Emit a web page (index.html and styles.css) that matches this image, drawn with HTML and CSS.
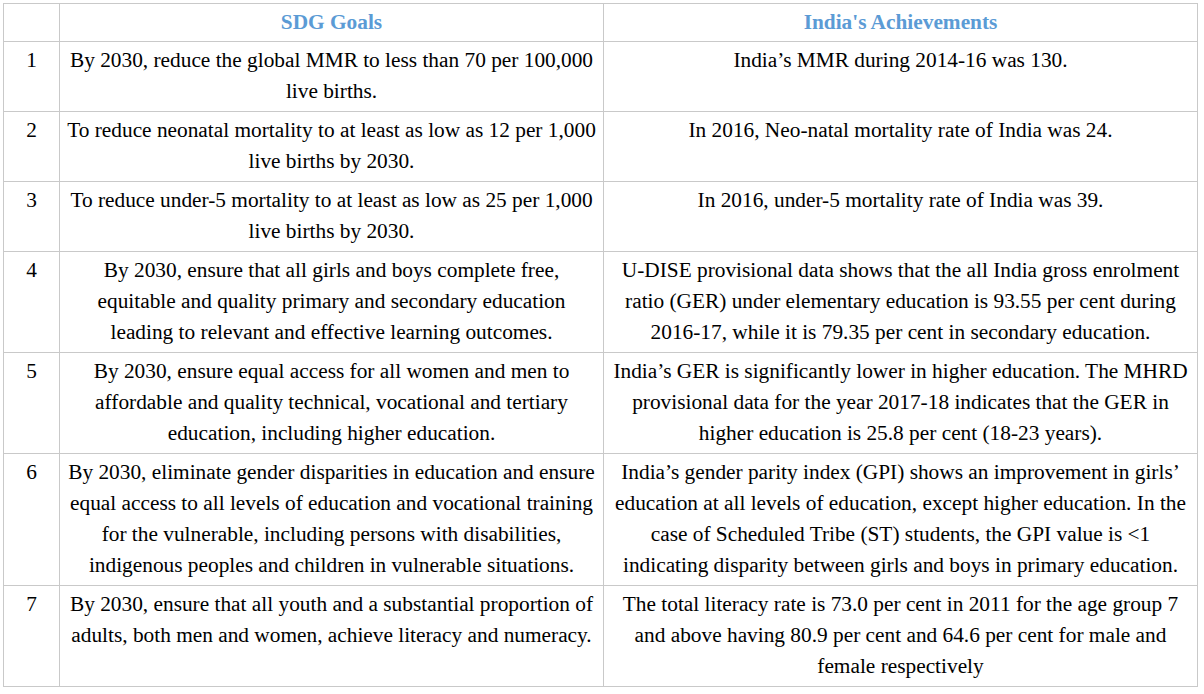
FILE: index.html
```html
<!DOCTYPE html>
<html>
<head>
<meta charset="utf-8">
<link rel="stylesheet" href="styles.css">
</head>
<body>
<table class="sdg">
  <colgroup>
    <col class="c-num">
    <col class="c-goal">
    <col class="c-ach">
  </colgroup>
  <thead>
    <tr>
      <th></th>
      <th>SDG Goals</th>
      <th>India's Achievements</th>
    </tr>
  </thead>
  <tbody>
    <tr>
      <td>1</td>
      <td>By 2030, reduce the global MMR to less than 70 per 100,000<br>live births.</td>
      <td>India’s MMR during 2014-16 was 130.</td>
    </tr>
    <tr>
      <td>2</td>
      <td>To reduce neonatal mortality to at least as low as 12 per 1,000<br>live births by 2030.</td>
      <td>In 2016, Neo-natal mortality rate of India was 24.</td>
    </tr>
    <tr>
      <td>3</td>
      <td>To reduce under-5 mortality to at least as low as 25 per 1,000<br>live births by 2030.</td>
      <td>In 2016, under-5 mortality rate of India was 39.</td>
    </tr>
    <tr>
      <td>4</td>
      <td>By 2030, ensure that all girls and boys complete free,<br>equitable and quality primary and secondary education<br>leading to relevant and effective learning outcomes.</td>
      <td>U-DISE provisional data shows that the all India gross enrolment<br>ratio (GER) under elementary education is 93.55 per cent during<br>2016-17, while it is 79.35 per cent in secondary education.</td>
    </tr>
    <tr>
      <td>5</td>
      <td>By 2030, ensure equal access for all women and men to<br>affordable and quality technical, vocational and tertiary<br>education, including higher education.</td>
      <td>India’s GER is significantly lower in higher education. The MHRD<br>provisional data for the year 2017-18 indicates that the GER in<br>higher education is 25.8 per cent (18-23 years).</td>
    </tr>
    <tr>
      <td>6</td>
      <td>By 2030, eliminate gender disparities in education and ensure<br>equal access to all levels of education and vocational training<br>for the vulnerable, including persons with disabilities,<br>indigenous peoples and children in vulnerable situations.</td>
      <td>India’s gender parity index (GPI) shows an improvement in girls’<br>education at all levels of education, except higher education. In the<br>case of Scheduled Tribe (ST) students, the GPI value is &lt;1<br>indicating disparity between girls and boys in primary education.</td>
    </tr>
    <tr>
      <td>7</td>
      <td>By 2030, ensure that all youth and a substantial proportion of<br>adults, both men and women, achieve literacy and numeracy.</td>
      <td>The total literacy rate is 73.0 per cent in 2011 for the age group 7<br>and above having 80.9 per cent and 64.6 per cent for male and<br>female respectively</td>
    </tr>
  </tbody>
</table>
</body>
</html>
```
FILE: styles.css
```css
html, body {
  margin: 0;
  padding: 0;
  background: #ffffff;
}

body {
  padding: 3px 0 0 3px;
  font-family: "Liberation Serif", "Times New Roman", serif;
  color: #000000;
}

.sdg {
  border-collapse: collapse;
  table-layout: fixed;
  width: 1194px;
}

.c-num { width: 56px; }
.c-goal { width: 544px; }
.c-ach { width: 594px; }

.sdg th,
.sdg td {
  border: 1px solid #c9c9c9;
  text-align: center;
  vertical-align: top;
  font-size: 21.33px;
  line-height: 31px;
  padding: 3px 1px 4px 1px;
  white-space: nowrap;
}

.sdg th {
  font-weight: bold;
  color: #5b9bd5;
  padding-bottom: 3px;
}
```
